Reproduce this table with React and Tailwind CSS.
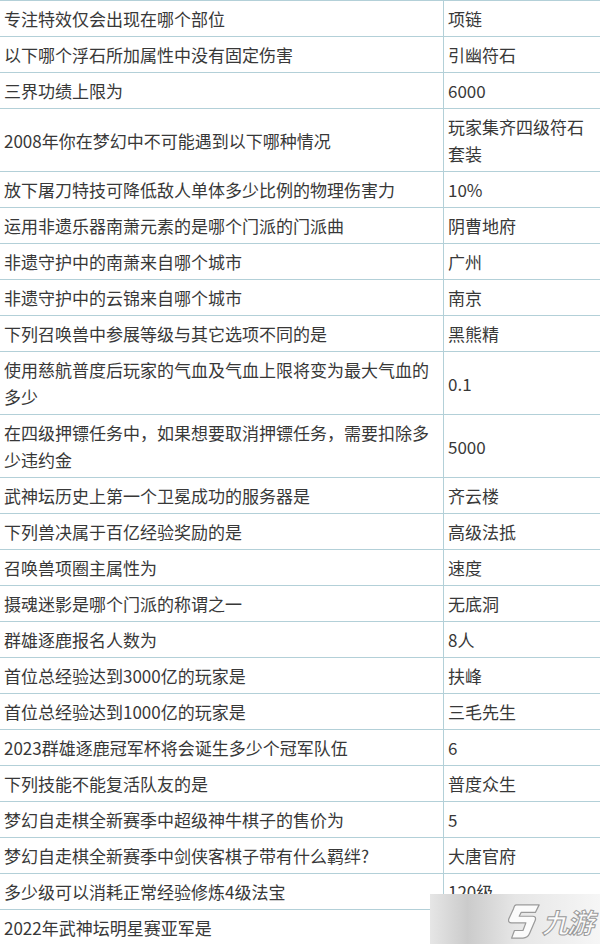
import React from 'react'

// Q&A rows: [question, answer]
const rows = [
  ['专注特效仅会出现在哪个部位', '项链'],
  ['以下哪个浮石所加属性中没有固定伤害', '引幽符石'],
  ['三界功绩上限为', '6000'],
  ['2008年你在梦幻中不可能遇到以下哪种情况', '玩家集齐四级符石套装'],
  ['放下屠刀特技可降低敌人单体多少比例的物理伤害力', '10%'],
  ['运用非遗乐器南萧元素的是哪个门派的门派曲', '阴曹地府'],
  ['非遗守护中的南萧来自哪个城市', '广州'],
  ['非遗守护中的云锦来自哪个城市', '南京'],
  ['下列召唤兽中参展等级与其它选项不同的是', '黑熊精'],
  ['使用慈航普度后玩家的气血及气血上限将变为最大气血的多少', '0.1'],
  ['在四级押镖任务中，如果想要取消押镖任务，需要扣除多少违约金', '5000'],
  ['武神坛历史上第一个卫冕成功的服务器是', '齐云楼'],
  ['下列兽决属于百亿经验奖励的是', '高级法抵'],
  ['召唤兽项圈主属性为', '速度'],
  ['摄魂迷影是哪个门派的称谓之一', '无底洞'],
  ['群雄逐鹿报名人数为', '8人'],
  ['首位总经验达到3000亿的玩家是', '扶峰'],
  ['首位总经验达到1000亿的玩家是', '三毛先生'],
  ['2023群雄逐鹿冠军杯将会诞生多少个冠军队伍', '6'],
  ['下列技能不能复活队友的是', '普度众生'],
  ['梦幻自走棋全新赛季中超级神牛棋子的售价为', '5'],
  ['梦幻自走棋全新赛季中剑侠客棋子带有什么羁绊?', '大唐官府'],
  ['多少级可以消耗正常经验修炼4级法宝', '120级'],
  ['2022年武神坛明星赛亚军是', ''],
]

function Watermark() {
  return (
    <div className="absolute right-0 bottom-0 w-[170px] h-[50px] flex items-center pl-[74px] gap-0 bg-[linear-gradient(90deg,#e6e6e6_0%,#cbcbcb_22%,#e6e6e6_50%,#f6f6f6_100%)]">
      <svg width="38" height="40" viewBox="0 0 40 40" className="mt-[3px] shrink-0">
        <path
          d="M13 3 L37 3 L33 11 L18 11 L16 15 L30 15 Q34 15 33 19 L27 33 Q25 38 20 38 L8 38 L11 30 L20 30 L23 22 L8 22 Q4 22 5 18 L10 7 Q11 3 13 3 Z"
          fill="#fbfbfb"
          stroke="#9a9a9a"
          strokeWidth="1.3"
          strokeLinejoin="round"
        />
      </svg>
      <span className="text-[27px] leading-none italic font-bold text-[#fbfbfb] [-webkit-text-stroke:1px_#9a9a9a] tracking-[-2px] mt-[5px] whitespace-nowrap font-['Noto_Sans_CJK_SC',sans-serif]">
        九游
      </span>
    </div>
  )
}

export default function App() {
  return (
    <div className="relative w-[600px] h-[944px] overflow-hidden bg-white font-['Noto_Sans_CJK_SC','Noto_Sans',sans-serif] text-[#383838]">
      <table className="border-collapse w-[602px] -ml-px table-fixed">
        <colgroup>
          <col className="w-[444px]" />
          <col className="w-[158px]" />
        </colgroup>
        <tbody>
          {rows.map(([q, a], i) => (
            <tr key={i}>
              <td className="border border-[#b3d0d8] px-1 py-1 text-[17px] leading-[27px] align-middle">{q}</td>
              <td className="border border-[#b3d0d8] px-1 py-1 text-[17px] leading-[27px] align-middle">{a}</td>
            </tr>
          ))}
        </tbody>
      </table>
      <Watermark />
    </div>
  )
}
